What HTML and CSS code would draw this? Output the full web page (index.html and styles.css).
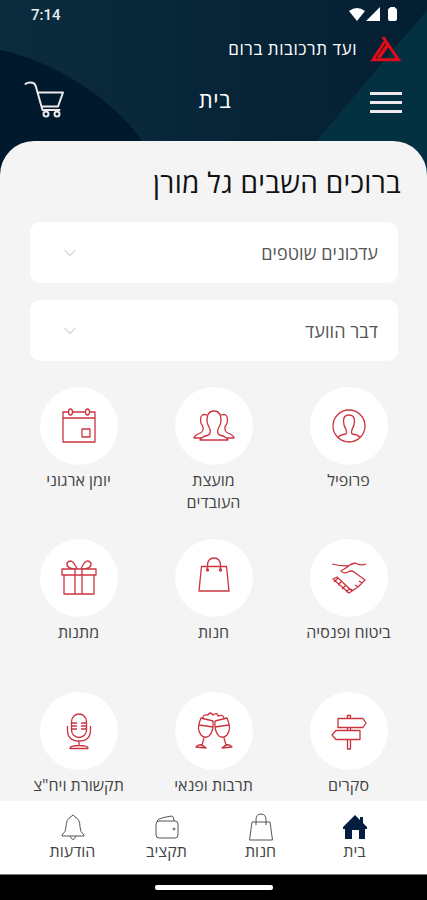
FILE: index.html
```
<!DOCTYPE html>
<html lang="he" dir="rtl">
<head>
<meta charset="utf-8">
<title>ועד תרכובות ברום</title>
<link rel="stylesheet" href="styles.css">
</head>
<body>
<div class="app">
  <header class="top">
    <svg class="top-bg" viewBox="0 0 427 190" preserveAspectRatio="none" aria-hidden="true">
      <defs><linearGradient id="g"><stop offset="0" stop-color="#0b2c3e"/><stop offset=".45" stop-color="#082639"/><stop offset="1" stop-color="#041f31"/></linearGradient></defs>
      <path fill="url(#g)" d="M0 0H427V190H0z"/>
      <path fill="#01192d" d="M0 50C52 61 108 95 140 138L170 190H0z"/>
      <path fill="#033142" d="M427 10L318 139L280 190H427z"/>
    </svg>
    <div class="status">
      <span class="time">7:14</span>
      <svg class="signals" viewBox="0 0 50 16" aria-hidden="true"><path fill="#fff" d="M0 4Q8-2 16 4L8 14zM31 0V14H17zM41 1V0H46V1Q48 1 48 3V12Q48 14 46 14H41Q39 14 39 12V3Q39 1 41 1z"/></svg>
    </div>
    <div class="brand">
      <svg class="logo" viewBox="0 0 32 26" aria-hidden="true"><g fill="none" stroke="#e30b17" stroke-width="3"><path d="M13 1L28.500 23.800H3L14.500 6"/><path d="M18.500 8L8.500 22" stroke-width="3.500"/></g></svg>
      <span class="brand-name">ועד תרכובות ברום</span>
    </div>
    <div class="titlebar">
      <div class="burger"><i></i><i></i><i></i></div>
      <h1 class="page">בית</h1>
      <svg class="cart" viewBox="0 0 42 38" aria-hidden="true"><g fill="none" stroke="#eee8ec" stroke-width="2" stroke-linecap="round" stroke-linejoin="round"><path d="M1.500 3Q4 1 8.500 1.800Q11 2.200 12 6L18.500 29H35.500M14 11.500H39L34 25.500H18"/><circle cx="22" cy="33" r="2.500"/><circle cx="33" cy="33" r="2.500"/></g></svg>
    </div>
  </header>
  <main class="sheet">
    <h2 class="welcome">ברוכים השבים גל מורן</h2>
    <div class="panel"><span>עדכונים שוטפים</span><svg class="chev" viewBox="0 0 12 8"><path d="M0.500 1L6 6.500L11.500 1"/></svg></div>
    <div class="panel"><span>דבר הוועד</span><svg class="chev" viewBox="0 0 12 8"><path d="M0.500 1L6 6.500L11.500 1"/></svg></div>
    <div class="tiles">
      <div class="tile"><div class="disc"><svg viewBox="0 0 40 40"><circle cx="20" cy="20" r="16"/><path d="M9 31.500Q11 28.500 17 28Q18 26 17 23.500Q14.500 20 14.500 15Q14.500 9 20 9T25.500 15Q25.500 20 23 23.500Q22 26 23 28Q29 28.500 31 31.500"/></svg></div><span>פרופיל</span></div>
      <div class="tile"><div class="disc"><svg viewBox="0 0 40 40"><path d="M6 34Q7 31 14.500 29Q18 27 15 21Q12 16 13.500 10Q15 5 20 5T26.500 10Q28 16 25 21Q22 27 25.500 29Q33 31 34 34zM13 9Q7 7 6.500 13Q6 17 9 21Q10 26 5 27.500Q0 30 0 32H7M27 9Q33 7 33.500 13Q34 17 31 21Q30 26 35 27.500Q40 30 40 32H33"/></svg></div><span>מועצת<br>העובדים</span></div>
      <div class="tile"><div class="disc"><svg viewBox="0 0 40 40"><path d="M9 6H4V36H36V6H31M14 6H26M4 12H36"/><rect x="23" y="23" width="8" height="8"/><ellipse cx="11.500" cy="6" rx="2" ry="3"/><ellipse cx="28.500" cy="6" rx="2" ry="3"/></svg></div><span>יומן ארגוני</span></div>
      <div class="tile"><div class="disc"><svg viewBox="0 0 40 40"><path d="M3 6Q10 8 19 8Q22 6 26 5Q31 8 37 6M20 8L12 13Q14 16 19 14Q22 12 25 14L36 22L29 29L20 35L4 21L8 19L23 33M5 24L9 20M9 27L13 23M13 31L17 27M17 34L21 30M24 33L22 31M29 29L26 27M33 25L30 23"/></svg></div><span>ביטוח ופנסיה</span></div>
      <div class="tile"><div class="disc"><svg viewBox="0 0 40 40"><path d="M7.500 8.500H32.500L35 33H5zM13.500 12V7Q14 0 20 0T26.500 7V12"/><circle cx="13.500" cy="12" r="1"/><circle cx="26.500" cy="12" r="1"/></svg></div><span>חנות</span></div>
      <div class="tile"><div class="disc"><svg viewBox="0 0 40 40"><path d="M3 11H37V17H3zM5 17V36H35V17M16 11V36M23 11V36M18 11Q7 11 8 5Q13-1 18 11M22 11Q33 11 32 5Q27-1 22 11"/></svg></div><span>מתנות</span></div>
      <div class="tile"><div class="disc"><svg viewBox="0 0 40 40"><path d="M9 7.500H34L37 12L34 16.500H9zM31 19.500H7L3 24L7 28.500H31zM18.500 7V4.500H21.500V7M18.500 17V19M21.500 17V19M18.500 29V38H21.500V29"/></svg></div><span>סקרים</span></div>
      <div class="tile"><div class="disc"><svg viewBox="0 0 40 40"><path d="M7 7L19 10Q20 20 15 25Q11 28 7 24Q2 18 7 7zM21 10L33 7Q38 18 33 24Q29 28 25 25Q20 20 21 10M5 14L19 16M21 16L35 14M10 27L8 34M30 27L32 34M2 36Q6 31 12 37zM28 37Q34 31 38 36zM9 7Q9 3 14 4Q16 0 19 4Q24 1 24 5Q29 3 30 7"/></svg></div><span>תרבות ופנאי</span></div>
      <div class="tile"><div class="disc"><svg viewBox="0 0 40 40"><rect x="12.500" y="3" width="15" height="23.500" rx="7.500"/><path d="M8.500 15V19Q8.500 30 20 30T31.500 19V15M20 30V35M11 37.500Q11 34.500 20 34.500T29 37.500zM13 12H18M22 12H27M13 15H18M22 15H27M13 18H18M22 18H27"/></svg></div><span>תקשורת ויח"צ</span></div>
    </div>
  </main>
  <nav class="tabs">
    <div class="tab"><svg viewBox="0 0 26 28"><path class="home" d="M1 14L13 2L18 7V4H21V10L25 14V16H23V26H17V17H10V26H3V16H1z"/></svg><span>בית</span></div>
    <div class="tab"><svg viewBox="0 0 26 28"><path d="M4 9H22L24.500 27H1.500zM8 12V7Q8 1 13 1T18 7V12"/></svg><span>חנות</span></div>
    <div class="tab"><svg viewBox="0 0 26 28"><rect x="2" y="8" width="22" height="17" rx="3"/><path d="M3 8Q4 5 18 3Q20 3 20 8"/><circle cx="20" cy="16" r="1"/></svg><span>תקציב</span></div>
    <div class="tab"><svg viewBox="0 0 26 28"><path d="M2 22Q6 19 6 14Q6 6 11 4Q13 0 15 4Q20 6 20 14Q20 19 24 22V23H2zM10 23Q13 30 16 23"/></svg><span>הודעות</span></div>
  </nav>
  <div class="gesture"><i></i></div>
</div>
</body>
</html>
```
FILE: styles.css
```
* { box-sizing: border-box; }
body { margin: 0; font-family: "Open Sans", "Liberation Sans", sans-serif; }
.app { width: 427px; height: 900px; overflow: hidden; display: flex; flex-direction: column; background: #000; }
.top { position: relative; flex: none; height: 141px; color: #fff; }
.top-bg { position: absolute; inset: 0; width: 427px; height: 190px; }
.status, .brand, .titlebar { position: relative; display: flex; align-items: center; }
.status { direction: ltr; justify-content: space-between; height: 30px; padding: 0 28px 0 31px; }
.time { font: 500 15px Roboto, sans-serif; color: #e8edef; }
.signals { width: 50px; height: 16px; }
.brand { height: 38px; padding-right: 25px; gap: 13px; }
.logo { width: 32px; height: 26px; }
.brand-name { font-size: 17px; font-weight: 500; letter-spacing: 0.550px; line-height: 24px; }
.titlebar { height: 64px; padding: 0 25px 0 24px; justify-content: space-between; }
.burger { width: 38px; display: grid; gap: 6px; margin-top: 5px; }
.burger i { height: 3px; width: 32px; background: #eee8ec; }
.page { margin: -2px 0 0; font-size: 22px; letter-spacing: 0.600px; font-weight: 500; }
.cart { width: 42px; height: 38px; }
.sheet { position: relative; flex: none; height: 660px; background: #f4f4f4; border-radius: 34px 34px 0 0; padding: 20px 29px 0 30px; overflow: hidden; }
.welcome { margin: 0 -3px 18px 0; height: 43px; line-height: 43px; font-size: 28px; letter-spacing: 0.300px; font-weight: 400; color: #111; white-space: nowrap; }
.panel { display: flex; align-items: center; justify-content: space-between; height: 61px; margin-bottom: 17px; padding: 0 20px 0 34px; border-radius: 10px; background: #fff; color: #555; font-size: 18px; letter-spacing: 0.070px; }
.chev { width: 12px; height: 8px; fill: none; stroke: #d8d8d8; stroke-width: 1.300; }
.tiles { display: grid; grid-template-columns: repeat(3, 135px); grid-auto-rows: 152.300px; margin: 26px -18px 0 -20px; }
.tile { display: flex; flex-direction: column; align-items: center; text-align: center; font-size: 16px; line-height: 22px; color: #444; }
.disc { width: 78px; height: 78px; border-radius: 50%; background: #fff; display: flex; align-items: center; justify-content: center; margin-bottom: 4px; }
.disc svg { width: 40px; height: 40px; overflow: visible; fill: none; stroke: #ca343f; stroke-width: 1.300; stroke-linejoin: round; }
.tabs { flex: none; display: grid; grid-template-columns: repeat(4, 94px); justify-content: center; height: 74px; padding-top: 12px; background: #fff; border-bottom: 1px solid #777; }
.tab { display: flex; flex-direction: column; align-items: center; font-size: 16px; line-height: 22px; color: #444; }
.tab svg { width: 26px; height: 28px; margin-bottom: -1px; fill: none; stroke: #555; stroke-width: 1; }
.tab .home { fill: #041e42; stroke: none; }
.gesture { flex: 1; display: flex; justify-content: center; padding-top: 10px; }
.gesture i { width: 118px; height: 5px; border-radius: 2px; background: #fff; }
```
